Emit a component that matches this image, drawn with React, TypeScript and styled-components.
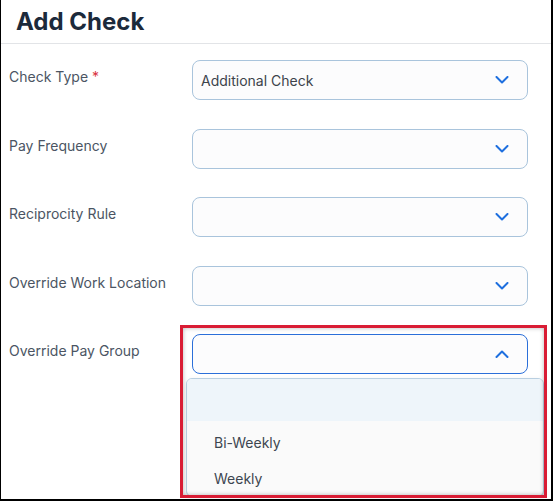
import styled, { createGlobalStyle } from "styled-components";

const GlobalStyle = createGlobalStyle`
  html, body {
    margin: 0;
    padding: 0;
    background: #ffffff;
  }
  body {
    font-family: Inter, "Liberation Sans", Arial, sans-serif;
  }
`;

const Frame = styled.div`
  position: relative;
  box-sizing: border-box;
  width: 553px;
  height: 501px;
  border-left: 1px solid #000;
  border-right: 2px solid #000;
  border-bottom: 2px solid #000;
  overflow: hidden;
  background: #fff;
`;

const Header = styled.div`
  height: 43px;
  border-bottom: 1px solid #e2e4e7;
  padding-left: 15px;
  display: flex;
  align-items: center;
`;

const Title = styled.h1`
  margin: 0;
  font-size: 24px;
  font-weight: 700;
  color: #1c2a3b;
`;

const Form = styled.div`
  display: flex;
  flex-direction: column;
  gap: 28.5px;
  padding: 16px 0 0 8px;
`;

const Row = styled.div`
  display: grid;
  grid-template-columns: 183px 336px;
  align-items: start;
`;

const Label = styled.div`
  padding-top: 7px;
  font-size: 14px;
  line-height: 20px;
  color: #4b5563;
`;

const Required = styled.span`
  color: #d9343f;
  margin-left: 4px;
`;

const SelectWrap = styled.div`
  position: relative;
`;

const SelectBox = styled.div<{ $open?: boolean }>`
  box-sizing: border-box;
  height: 40px;
  display: flex;
  align-items: center;
  justify-content: space-between;
  padding: 0 18px 0 8px;
  border-radius: 8px;
  background: #fcfcfd;
  border: ${(p) => (p.$open ? "1.5px solid #2b6fd9" : "1px solid #a9c4dc")};
  font-size: 14px;
  color: #3d434b;
`;

const Chevron = ({ up }: { up?: boolean }) => (
  <svg width="14" height="8" viewBox="0 0 14 8" fill="none">
    <path
      d={up ? "M1.5 7 L7 1.5 L12.5 7" : "M1.5 1 L7 6.5 L12.5 1"}
      stroke="#1e6fdf"
      strokeWidth="2"
      strokeLinecap="round"
      strokeLinejoin="round"
    />
  </svg>
);

const Menu = styled.div`
  position: absolute;
  top: 44px;
  left: -6px;
  right: -16px;
  border: 1px solid #b9cfe1;
  border-radius: 6px;
  background: #fafafa;
  box-shadow: 0 2px 6px rgba(0, 0, 0, 0.08);
  overflow: hidden;
`;

const OptionList = styled.div`
  padding-top: 3px;
`;

const Option = styled.div<{ $active?: boolean }>`
  height: ${(p) => (p.$active ? "42px" : "36px")};
  display: flex;
  align-items: center;
  padding-left: 27px;
  font-size: 14px;
  color: #3d4650;
  background: ${(p) => (p.$active ? "#eef5fa" : "transparent")};
`;

const Highlight = styled.div`
  position: absolute;
  left: 179px;
  top: 325px;
  width: 367px;
  height: 173px;
  box-sizing: border-box;
  border: 3px solid #d91c34;
  box-shadow: inset 0 0 4px rgba(0, 0, 0, 0.3);
  pointer-events: none;
`;

const fields = [
  { label: "Check Type", required: true, value: "Additional Check" },
  { label: "Pay Frequency" },
  { label: "Reciprocity Rule" },
  { label: "Override Work Location" },
];

export default function App() {
  return (
    <>
      <GlobalStyle />
      <Frame>
        <Header>
          <Title>Add Check</Title>
        </Header>
        <Form>
          {fields.map((f) => (
            <Row key={f.label}>
              <Label>
                {f.label}
                {f.required && <Required>*</Required>}
              </Label>
              <SelectWrap>
                <SelectBox>
                  <span>{f.value ?? ""}</span>
                  <Chevron />
                </SelectBox>
              </SelectWrap>
            </Row>
          ))}
          <Row>
            <Label>Override Pay Group</Label>
            <SelectWrap>
              <SelectBox $open>
                <span />
                <Chevron up />
              </SelectBox>
              <Menu>
                <Option $active />
                <OptionList>
                  <Option>Bi-Weekly</Option>
                  <Option>Weekly</Option>
                </OptionList>
              </Menu>
            </SelectWrap>
          </Row>
        </Form>
        <Highlight />
      </Frame>
    </>
  );
}
